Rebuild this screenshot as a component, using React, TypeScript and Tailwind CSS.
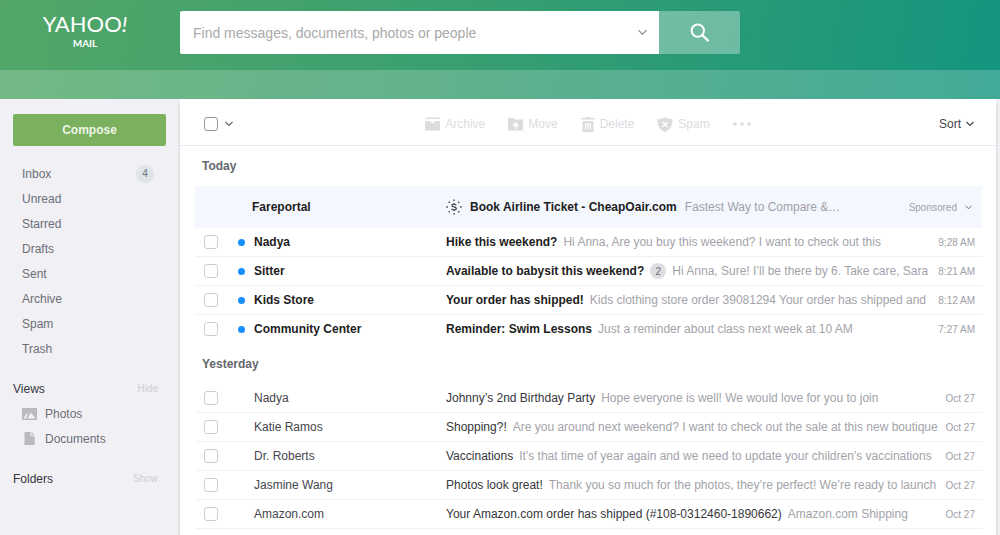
import React from 'react';

type Message = {
  id: string;
  from: string;
  subject: string;
  preview: string;
  time: string;
  unread?: boolean;
  count?: number;
};

const folders = [
  { name: "Inbox", count: 4 },
  { name: "Unread" },
  { name: "Starred" },
  { name: "Drafts" },
  { name: "Sent" },
  { name: "Archive" },
  { name: "Spam" },
  { name: "Trash" }
];

const today: Message[] = [
  {
    id: "t1",
    from: "Nadya",
    subject: "Hike this weekend?",
    preview: "Hi Anna, Are you buy this weekend? I want to check out this",
    time: "9;28 AM",
    unread: true
  },
  {
    id: "t2",
    from: "Sitter",
    subject: "Available to babysit this weekend?",
    preview: "Hi Anna, Sure! I’ll be there by 6. Take care, Sara",
    time: "8:21 AM",
    unread: true,
    count: 2
  },
  {
    id: "t3",
    from: "Kids Store",
    subject: "Your order has shipped!",
    preview: "Kids clothing store order 39081294 Your order has shipped and",
    time: "8:12 AM",
    unread: true
  },
  {
    id: "t4",
    from: "Community Center",
    subject: "Reminder: Swim Lessons",
    preview: "Just a reminder about class next week at 10 AM",
    time: "7:27 AM",
    unread: true
  }
];

const yesterday: Message[] = [
  {
    id: "y1",
    from: "Nadya",
    subject: "Johnny’s 2nd Birthday Party",
    preview: "Hope everyone is well! We would love for you to join",
    time: "Oct 27"
  },
  {
    id: "y2",
    from: "Katie Ramos",
    subject: "Shopping?!",
    preview: "Are you around next weekend? I want to check out the sale at this new boutique",
    time: "Oct 27"
  },
  {
    id: "y3",
    from: "Dr. Roberts",
    subject: "Vaccinations",
    preview: "It’s that time of year again and we need to update your children’s vaccinations",
    time: "Oct 27"
  },
  {
    id: "y4",
    from: "Jasmine Wang",
    subject: "Photos look great!",
    preview: "Thank you so much for the photos, they’re perfect! We’re ready to launch",
    time: "Oct 27"
  },
  {
    id: "y5",
    from: "Amazon.com",
    subject: "Your Amazon.com order has shipped (#108-0312460-1890662)",
    preview: "Amazon.com Shipping",
    time: "Oct 27"
  }
];

const Chevron = ({ className }: { className: string }) => (
  <svg viewBox="0 0 8 6" className={className} fill="none" stroke="currentColor" strokeWidth="1.2" aria-hidden="true">
    <path d="M0.5 1 4 4.5 7.5 1" />
  </svg>
);

const SearchIcon = () => (
  <svg viewBox="0 0 20 20" className="size-5" fill="none" stroke="currentColor" strokeWidth="2" aria-hidden="true">
    <circle cx="7.8" cy="7.6" r="6.2" />
    <path d="m12.2 12 6.4 6.2" strokeWidth="2.4" />
  </svg>
);

const ArchiveIcon = () => (
  <svg viewBox="0 0 15 14" className="h-3.5 w-[15px]" fill="currentColor" aria-hidden="true">
    <path d="M0.5 0.5h14v1.6H0.500zM0 4H4.500L7.500 6.600 10.500 4H15v9.500H0z" />
  </svg>
);

const MoveIcon = () => (
  <svg viewBox="0 0 15 14" className="h-3.5 w-[15px]" fill="currentColor" aria-hidden="true">
    <path d="M0 1h5.5l1.2 1.6H15V13.5H0z" />
    <path d="M7.7 12V6.6M4.8 9l2.9-2.9L10.6 9" fill="none" stroke="#fff" strokeWidth="1.6" />
  </svg>
);

const TrashIcon = () => (
  <svg viewBox="0 0 14 15" className="h-[15px] w-3.5" fill="currentColor" aria-hidden="true">
    <path d="M4.500 0h5v1H14v1.400H0V1h4.500zM1.500 4.200h11V15h-11z" />
    <path d="M4.600 12.600V7h4.800v5.600M7 7v5.600" fill="none" stroke="#fff" strokeWidth="1.2" />
  </svg>
);

const SpamIcon = () => (
  <svg viewBox="0 0 16 15" className="h-[15px] w-4" fill="currentColor" aria-hidden="true">
    <path d="M8 0c1.8 1.4 4.2 2 7.4 2C16 8 13.8 12.6 8 15 2.2 12.6 0 8 .6 2 3.8 2 6.2 1.4 8 0z" />
    <path d="m5.5 5 5 5m0-5-5 5" stroke="#fff" strokeWidth="1.7" />
  </svg>
);

const PhotosIcon = () => (
  <svg viewBox="0 0 15 12" className="h-3 w-[15px]" aria-hidden="true">
    <path d="M0 0h15v12H0z" fill="#b9b9bf" />
    <path d="M1.5 10.5 4.3 5.5 5.8 5.5 4.2 10.5zM5.5 10.5 9 4.5 13.5 10.5z" fill="#f1f1f6" />
  </svg>
);

const DocumentIcon = () => (
  <svg viewBox="0 0 15 13" className="h-[13px] w-[15px]" aria-hidden="true">
    <path d="M2.5 0H8.5v4.2h4.2V13H2.5z" fill="#b9b9bf" />
    <path d="M9.5 0 12.7 3.3H9.5z" fill="#b9b9bf" />
  </svg>
);

const SponsorIcon = () => (
  <svg viewBox="0 0 16 16" className="size-4 shrink-0" fill="none" stroke="#3c3c46" aria-hidden="true">
    <path d="M10.300 6.300C9.800 5.400 9 5.100 8 5.100 6.700 5.100 5.800 5.600 5.800 6.500 5.800 8.400 10.300 7.400 10.300 9.400 10.300 10.400 9.300 10.900 8 10.900 6.900 10.900 6 10.600 5.600 9.700M8 4v1M8 11v1" strokeWidth="1.200" />
    <path d="M8 0.400v1.500M8 14.100v1.500M0.400 8h1.500M14.100 8h1.500M2.700 2.700l1.100 1.100M12.200 12.200l1.100 1.100M2.700 13.300l1.100-1.100M12.200 3.800l1.100-1.100" strokeWidth="1.300" />
  </svg>
);

const actions = [
  { label: "Archive", icon: <ArchiveIcon /> },
  { label: "Move", icon: <MoveIcon /> },
  { label: "Delete", icon: <TrashIcon /> },
  { label: "Spam", icon: <SpamIcon /> }
];

const MessageList = ({ messages }: { messages: Message[] }) => (
  <ul>
    {messages.map((message) => (
      <li
        key={message.id}
        className={
          message.unread
            ? "flex h-[29px] items-center border-b border-[#f2f2f5] pr-[7px] pl-[9px] last:border-transparent"
            : "flex h-[29px] items-center border-b border-[#f2f2f5] pr-[7px] pl-[9px]"
        }
      >
        <input
          type="checkbox"
          aria-label={`Select message from ${message.from}`}
          className="size-[14px] shrink-0 appearance-none rounded-[3px] border border-[#cdcdd2] bg-white"
        />
        <div className="flex w-9 shrink-0 items-center justify-end pr-[9px]">
          {message.unread && <span className="size-[7px] rounded-full bg-[#188fff]" />}
        </div>
        <span className={message.unread ? "w-48 shrink-0 font-bold text-[#1d1d22]" : "w-48 shrink-0 text-[#46464c]"}>
          {message.from}
        </span>
        <div className="flex min-w-0 flex-1 items-center gap-[6px] whitespace-nowrap">
          <span className={message.unread ? "font-bold text-[#1d1d22]" : "text-[#36363b]"}>{message.subject}</span>
          {message.count && (
            <span className="flex size-4 shrink-0 items-center justify-center rounded-full bg-[#dedee3] text-[10px] text-[#6d6d75]">
              {message.count}
            </span>
          )}
          <span className="truncate text-[#a3a3aa]">{message.preview}</span>
        </div>
        <span className="shrink-0 pl-1 text-[10px] text-[#a0a0a8]">{message.time}</span>
      </li>
    ))}
  </ul>
);

const Header = () => (
  <header className="bg-[linear-gradient(100deg,#52a768_0%,#3a9f70_45%,#14957f_100%)]">
    <div className="flex h-[70px] items-start pt-[11px]">
      <a href="#" aria-label="Yahoo Mail" className="flex w-[180px] shrink-0 flex-col items-center pr-[10px] font-['Lato',sans-serif] text-white">
        <span className="flex items-baseline leading-[26px]">
          <span className="text-[22px]">YAHOO</span>
          <span className="text-[22px] italic">!</span>
        </span>
        <span className="text-[10px] leading-3 font-bold">MAIL</span>
      </a>
      <form className="flex h-[43px] w-[56%] items-stretch">
        <div className="flex flex-1 items-center rounded-l-[2px] bg-white pr-3">
          <input
            type="text"
            aria-label="Search mail"
            placeholder="Find messages, documents, photos or people"
            className="min-w-0 flex-1 pl-[13px] text-sm outline-none placeholder:text-[#a9a9a9]"
          />
          <button type="button" aria-label="Search options" className="text-[#9a9a9a]">
            <Chevron className="h-[7px] w-[9px]" />
          </button>
        </div>
        <button type="button" aria-label="Search" className="flex w-[81px] items-center justify-center rounded-r-[2px] bg-white/33 text-white">
          <SearchIcon />
        </button>
      </form>
    </div>
    <div className="h-[29px] bg-white/20" />
  </header>
);

const Sidebar = () => (
  <aside className="w-[180px] shrink-0 pt-[15px] pr-[14px] pl-[13px]">
    <button type="button" className="h-8 w-full rounded-[2px] bg-[#7bb05f] text-xs font-bold text-[#edf6e8]">
      Compose
    </button>
    <nav className="mt-[15px] flex flex-col pl-[9px] text-[#6e6e76]">
      {folders.map((folder) => (
        <a key={folder.name} href="#" className="flex h-[25px] items-center justify-between pr-3">
          {folder.name}
          {folder.count && (
            <span className="flex size-[18px] items-center justify-center rounded-full bg-[#dfe4e6] text-[10px]">
              {folder.count}
            </span>
          )}
        </a>
      ))}
    </nav>
    <div className="mt-[15px] flex h-[25px] items-center justify-between pr-2">
      <h2 className="text-[#36363c]">Views</h2>
      <button type="button" className="text-[10px] text-[#cfcfd5]">Hide</button>
    </div>
    <div className="flex flex-col pl-[9px] text-[#6e6e76]">
      <a href="#" className="flex h-[25px] items-center gap-2">
        <PhotosIcon />
        Photos
      </a>
      <a href="#" className="flex h-[25px] items-center gap-2">
        <DocumentIcon />
        Documents
      </a>
    </div>
    <div className="mt-[15px] flex h-[25px] items-center justify-between pr-2">
      <h2 className="text-[#36363c]">Folders</h2>
      <button type="button" className="text-[10px] text-[#cfcfd5]">Show</button>
    </div>
  </aside>
);

const Toolbar = () => (
  <div className="flex h-[47px] items-center border-b border-[#ebebed] pt-1 pr-[22px] pl-6">
    <input
      type="checkbox"
      aria-label="Select all messages"
      className="size-[14px] appearance-none rounded-[3px] border border-[#98989d]"
    />
    <button type="button" aria-label="Selection options" className="ml-[7px] text-[#66666c]">
      <Chevron className="h-[6px] w-2" />
    </button>
    <div className="flex flex-1 items-center justify-center gap-[23px] pl-1 text-[#dcdcde]">
      {actions.map((action) => (
        <button key={action.label} type="button" className="flex items-center gap-[5px]">
          {action.icon}
          {action.label}
        </button>
      ))}
      <button type="button" aria-label="More actions">
        <svg viewBox="0 0 18 4" className="h-1 w-[18px]" fill="currentColor" aria-hidden="true">
          <circle cx="2" cy="2" r="1.8" />
          <circle cx="9" cy="2" r="1.8" />
          <circle cx="16" cy="2" r="1.8" />
        </svg>
      </button>
    </div>
    <button type="button" className="flex items-center gap-[5px] text-[#46464c]">
      Sort
      <Chevron className="h-[6px] w-2" />
    </button>
  </div>
);

const App = () => {
  return (
    <div className="flex min-h-screen flex-col bg-[#f0f0f5] font-['Liberation_Sans',Arial,sans-serif] text-[12px]">
      <Header />
      <div className="flex flex-1 pr-1">
        <Sidebar />
        <main className="min-w-0 flex-1 bg-white shadow-[0_4px_3px_rgba(0,0,0,0.18)]">
          <Toolbar />
          <div className="pr-[14px] pl-[15px]">
            <h2 className="flex h-10 items-center pl-[7px] font-bold text-[#66666d]">Today</h2>

            {/* Sponsored message */}
            <div className="flex h-[42px] items-center bg-[#f4f7fe] pr-[10px] pl-[57px]">
              <span className="w-[194px] shrink-0 font-bold text-[#1d1d22]">Fareportal</span>
              <div className="flex min-w-0 flex-1 items-center gap-2 whitespace-nowrap">
                <SponsorIcon />
                <span className="font-bold text-[#1d1d22]">Book Airline Ticket - CheapOair.com</span>
                <span className="truncate text-[#a0a0a8]">Fastest Way to Compare &amp;…</span>
              </div>
              <button type="button" className="flex items-center gap-2 text-[10px] text-[#a0a0a8]">
                Sponsored
                <Chevron className="h-[5px] w-[7px] text-[#66666c]" />
              </button>
            </div>
            <MessageList messages={today} />

            <h2 className="flex h-10 items-center pl-[7px] font-bold text-[#66666d]">Yesterday</h2>
            <MessageList messages={yesterday} />
          </div>
        </main>
      </div>
    </div>
  );
};

export default App;
